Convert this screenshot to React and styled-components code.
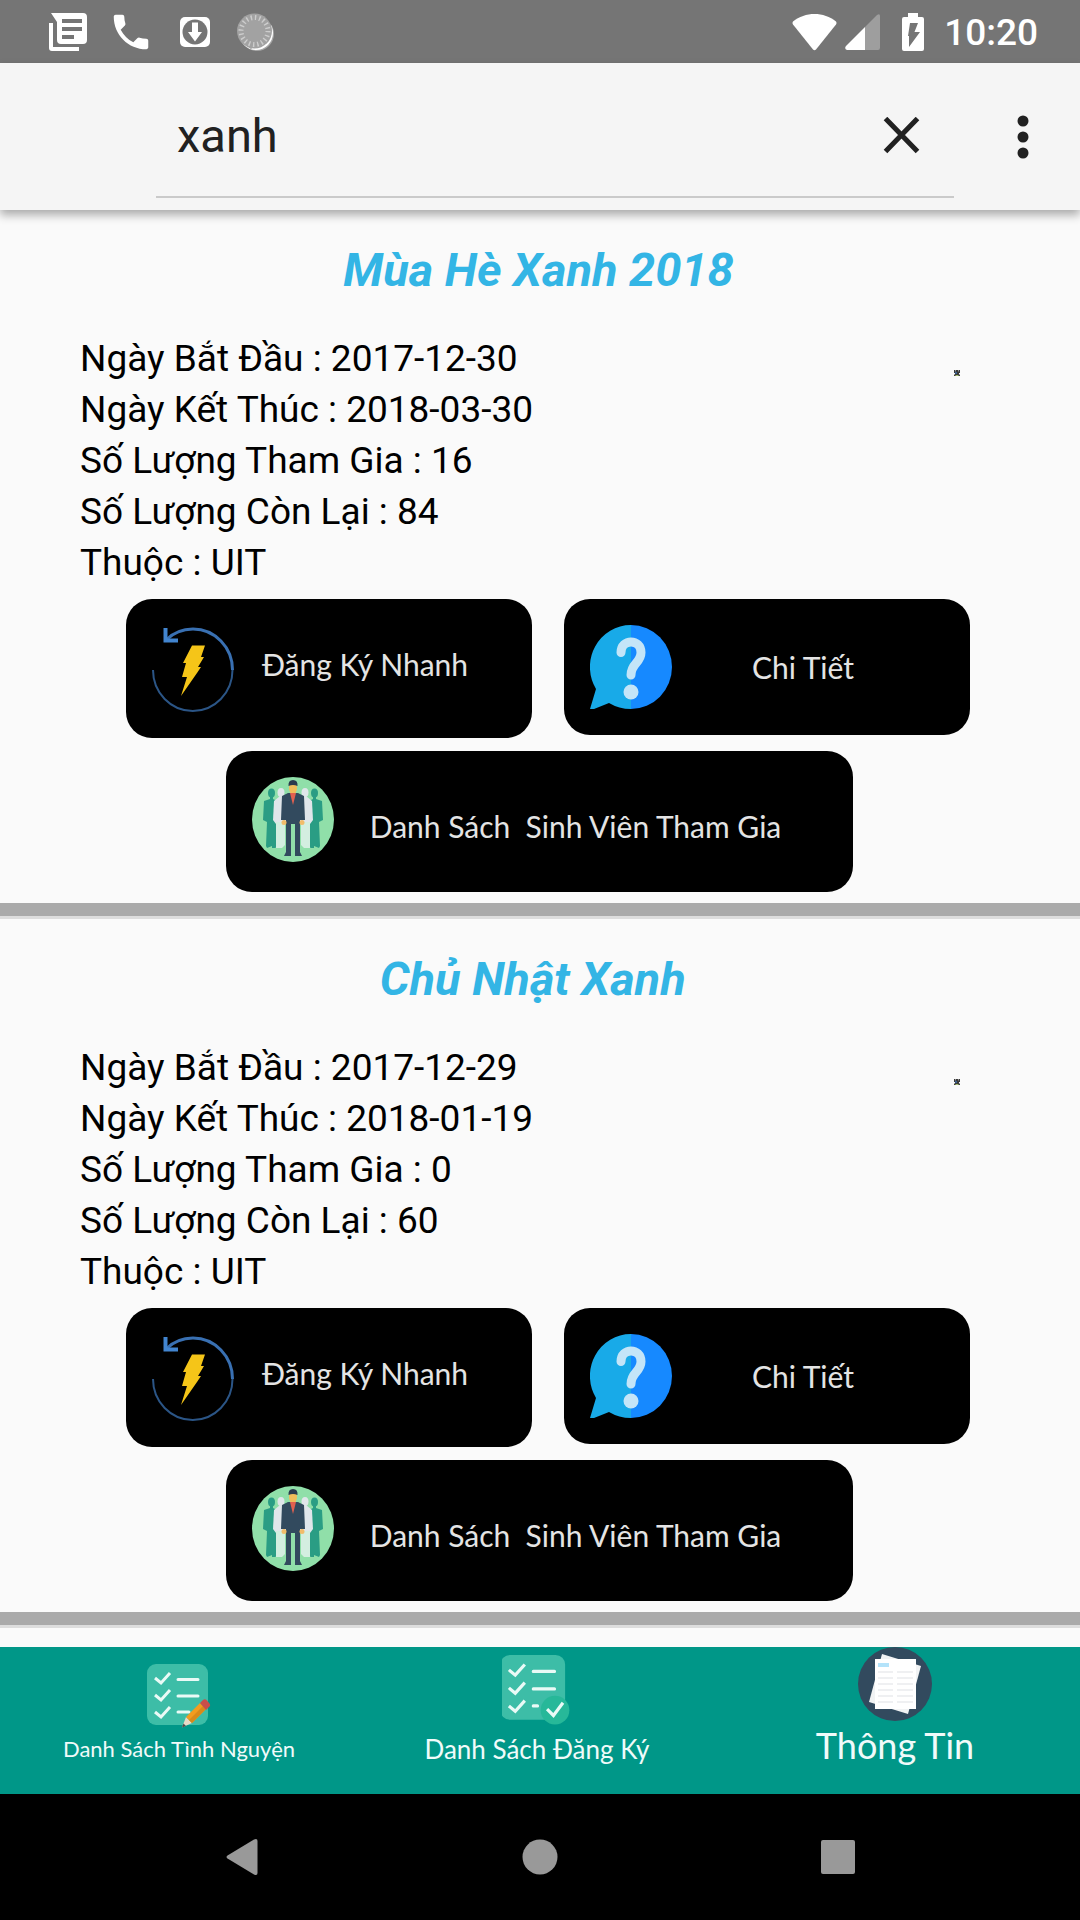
import React, { useState } from "react";
import styled, { createGlobalStyle } from "styled-components";

const GlobalStyle = createGlobalStyle`
  *, *::before, *::after { box-sizing: border-box; }
  body {
    margin: 0;
    background: #fafafa;
    color: #000;
    font-family: Roboto, "Noto Sans", sans-serif;
  }
  button, input { font: inherit; color: inherit; }
  button { margin: 0; padding: 0; border: 0; background: none; cursor: pointer; }
  svg { display: block; flex: none; }
`;

const Screen = styled.div`
  min-height: 100vh;
  display: flex;
  flex-direction: column;
`;

/* ---------- Status bar ---------- */

const StatusBar = styled.header`
  display: flex;
  align-items: center;
  justify-content: space-between;
  height: 63px;
  padding: 0 42px 0 48px;
  background: #757575;
  color: #fff;
`;

const StatusGroup = styled.div`
  display: flex;
  align-items: center;
  gap: ${(p) => p.$gap}px;
`;

const Clock = styled.time`
  margin-left: 12px;
  padding-top: 2px;
  font-size: 37px;
  font-weight: 500;
  line-height: 44px;
`;

/* ---------- Search toolbar ---------- */

const Toolbar = styled.form`
  position: relative;
  z-index: 1;
  display: flex;
  align-items: stretch;
  height: 147px;
  padding: 12px 0 12px 156px;
  background: #f5f5f5;
  color: #212121;
  box-shadow: 0 5px 9px rgba(0, 0, 0, 0.32);
`;

const SearchField = styled.div`
  flex: 1;
  min-width: 0;
  display: flex;
  border-bottom: 2px solid #cacaca;
`;

const SearchInput = styled.input`
  flex: 1;
  min-width: 0;
  padding: 0 0 0 21px;
  border: 0;
  outline: 0;
  background: transparent;
  font-size: 47px;
  line-height: 56px;
`;

const ToolButton = styled.button`
  display: flex;
  align-items: center;
  justify-content: center;
  width: ${(p) => p.$width}px;
`;

const MenuSlot = styled.div`
  display: flex;
  padding-left: 12px;
`;

/* ---------- Campaign list ---------- */

const List = styled.main`
  flex: 1;
`;

const Card = styled.article`
  padding: 32px 0 11px;
  border-bottom: 13px solid #aaa;
`;

const Divider = styled.div`
  height: 3px;
  background: #ddd;
`;

const Title = styled.h2`
  margin: 0 0 36px;
  padding-right: 3px;
  color: #33b5e5;
  font-size: 47px;
  font-style: italic;
  font-weight: 700;
  line-height: 55px;
  text-align: center;
  white-space: pre;
`;

const Info = styled.div`
  display: flex;
  justify-content: space-between;
  align-items: flex-start;
  padding: 0 120px 0 80px;
`;

const Facts = styled.ul`
  margin: 0;
  padding: 0;
  list-style: none;
  font-size: 37px;
  line-height: 51px;
`;

const Thumb = styled.div`
  padding-top: 37px;
`;

const Actions = styled.div`
  display: grid;
  grid-template-columns: 1fr 1fr;
  align-items: start;
  gap: 32px;
  padding: 11px 110px 13px 126px;
`;

const WideAction = styled.div`
  display: grid;
  padding: 0 227px 0 226px;
`;

const ActionButton = styled.button`
  display: flex;
  align-items: flex-start;
  height: ${(p) => p.$height}px;
  padding: 26px;
  border-radius: 26px;
  background: #000;
`;

const ActionLabel = styled.span`
  flex: 1;
  padding: ${(p) => p.$top}px 10px 0 0;
  color: #e4e4e4;
  font-family: Lato, "Open Sans", sans-serif;
  font-size: 30px;
  line-height: 36px;
  text-align: center;
  white-space: pre;
`;

/* ---------- Bottom tabs ---------- */

const Tabs = styled.nav`
  display: grid;
  grid-template-columns: repeat(3, 1fr);
  height: 147px;
  padding-right: 6px;
  background: #009788;
`;

const Tab = styled.button`
  display: flex;
  flex-direction: column;
  align-items: center;
`;

const TabIcon = styled.span`
  height: 82px;
  padding-top: ${(p) => p.$top}px;
`;

const TabLabel = styled.span`
  color: #f0fbfa;
  font-family: Lato, "Open Sans", sans-serif;
  font-size: ${(p) => p.$size}px;
  line-height: ${(p) => p.$line}px;
  white-space: nowrap;
`;

/* ---------- System navigation ---------- */

const SystemNav = styled.footer`
  display: flex;
  height: 126px;
  padding: 0 93px;
  background: #000;
`;

const SystemButton = styled.button`
  flex: 1;
  display: flex;
  align-items: center;
  justify-content: center;
`;

/* ---------- Drawings ---------- */

const NewsIcon = () => (
  <svg width="40" height="40" viewBox="0 0 40 40" fill="#fff" aria-hidden="true">
    <path d="M3 1H35a4 4 0 0 1 4 4V28a4 4 0 0 1-4 4H13a4 4 0 0 1-4-4V10ZM14 7v4H34V7ZM14 15v4H34v-4ZM14 23v4H26v-4Z" fillRule="evenodd" />
    <path d="M1 11H5V35H31v4H4a3 3 0 0 1-3-3Z" />
  </svg>
);

const PhoneIcon = () => (
  <svg width="46" height="46" viewBox="0 0 24 24" fill="#fff" aria-hidden="true">
    <path d="M6.62 10.79c1.44 2.83 3.76 5.14 6.59 6.59l2.2-2.2c.27-.27.67-.36 1.02-.24 1.12.37 2.33.57 3.57.57.55 0 1 .45 1 1V20c0 .55-.45 1-1 1-9.39 0-17-7.61-17-17 0-.55.45-1 1-1h3.5c.55 0 1 .45 1 1 0 1.25.2 2.45.57 3.57.11.35.03.74-.25 1.02z" />
  </svg>
);

const DownloadIcon = () => (
  <svg width="30" height="30" viewBox="0 0 30 30" aria-hidden="true">
    <rect width="30" height="30" rx="5" fill="#fff" />
    <circle cx="15" cy="15" r="12.5" fill="#757575" />
    <path d="M12 5.500h6V15h4L15 24.500 8 15h4Z" fill="#fff" />
  </svg>
);

const SpinnerIcon = () => (
  <svg width="38" height="38" viewBox="0 0 38 38" aria-hidden="true">
    <circle cx="20" cy="21" r="17" fill="#a6a6a6" />
    <circle cx="19" cy="20" r="17" fill="#fff" />
    <path d="M0 22V0H22L36 10 14 36Z" fill="#757575" />
    <circle cx="17.500" cy="18" r="17.500" fill="#a2a2a2" />
    <circle cx="17.500" cy="18" r="13.500" fill="none" stroke="#cdcdcd" strokeWidth="5" strokeDasharray="1.4 2.84" />
  </svg>
);

const WifiIcon = () => (
  <svg width="45" height="38" viewBox="0 0 45 38" fill="#fff" aria-hidden="true">
    <path d="M1 8.500C13-1.500 32-1.500 44 8.500Q45 10 44 11.500L24 36.500Q22.500 38 21 36.500L1 11.500Q0 10 1 8.500Z" />
  </svg>
);

const SignalIcon = () => (
  <svg width="35" height="36" viewBox="0 0 35 36" aria-hidden="true">
    <path d="M20 13L32 1Q35-1 35 2V33.500Q35 36 33 36H20Z" fill="#9e9e9e" />
    <path d="M20 13V36H2Q-1 35 1 32Z" fill="#fff" />
  </svg>
);

const BatteryIcon = () => (
  <svg width="22" height="38" viewBox="0 0 22 38" aria-hidden="true">
    <path d="M6 0H16V4H20a2 2 0 0 1 2 2V36a2 2 0 0 1-2 2H2a2 2 0 0 1-2-2V6A2 2 0 0 1 2 4H6Z" fill="#fff" />
    <path d="M8 10H16L12.500 19H18L7 34V23H6Z" fill="#757575" />
  </svg>
);

const CloseIcon = () => (
  <svg width="38" height="38" viewBox="0 0 38 38" aria-hidden="true">
    <path d="M2.500 1.500L34.500 34.500M34.500 1.500L2.500 34.500" stroke="#212121" strokeWidth="5" />
  </svg>
);

const MoreIcon = () => (
  <svg width="12" height="44" viewBox="0 0 12 44" fill="#212121" aria-hidden="true">
    <circle cx="6" cy="6" r="5.500" />
    <circle cx="6" cy="22" r="5.500" />
    <circle cx="6" cy="38" r="5.500" />
  </svg>
);

const ThumbIcon = () => (
  <svg width="6" height="6" viewBox="0 0 6 6" aria-hidden="true">
    <path d="M0 0H1.500V1.500H2V0H4V1.500H4.500V0H6V3H5V4.500H6V6H0V4.500H1V3H0Z" fill="#3a3a3a" />
    <path d="M1 2H3V4H1Z" fill="#3b5f8c" />
    <path d="M1.500 5H4.500V6H1.500Z" fill="#a8c070" />
  </svg>
);

const FlashIcon = () => (
  <svg width="82" height="87" viewBox="0 0 82 87" aria-hidden="true">
    <path d="M14 15C22 7 31 4 41 4A39.500 41 0 0 1 80.500 45" fill="none" stroke="#3970b2" strokeWidth="3" />
    <path d="M80.500 45A39.750 41 0 0 1 1 45" fill="none" stroke="#2b5586" strokeWidth="2" />
    <path d="M13.500 3V15.500H26" fill="none" stroke="#4285d0" strokeWidth="4" />
    <path d="M40 20.500H53L49 32H52L46 42H49L45 48L29 71L35 52H30L34 38H31Z" fill="#f5c518" />
  </svg>
);

const QuestionIcon = () => (
  <svg width="82" height="84" viewBox="0 0 82 84" aria-hidden="true">
    <path d="M41 0A41 42 0 0 0 6 64L0 84H4L19 78Q29 84 41 84Z" fill="#18aae8" />
    <path d="M41 0A41 42 0 0 1 41 84Z" fill="#1689ff" />
    <path d="M31 27.500C31 13.500 51 13.500 51 27.500C51 38 41 38 41 50" fill="none" stroke="#c4e5f8" strokeWidth="9" strokeLinecap="round" />
    <circle cx="41" cy="67" r="7.500" fill="#c4e5f8" />
  </svg>
);

const PeopleIcon = () => (
  <svg width="82" height="85" viewBox="0 0 82 85" aria-hidden="true">
    <ellipse cx="41" cy="42.500" rx="41" ry="42.500" fill="#90dfa9" />
    <g fill="#2a9d84">
      <ellipse cx="19.500" cy="16" rx="3.500" ry="4.500" />
      <ellipse cx="62.500" cy="16" rx="3.500" ry="4.500" />
      <path d="M18 19H21V22L25 24V70L23 71H20V69L15 71L14 69L15 45L11 43L12 24L18 22Z" />
      <path d="M64 19H61V22L57 24V70L59 71H62V69L67 71L68 69L67 45L71 43L70 24L64 22Z" />
    </g>
    <g fill="#e0e6ea">
      <ellipse cx="29" cy="15.500" rx="3.500" ry="4.500" />
      <ellipse cx="53" cy="15.500" rx="3.500" ry="4.500" />
      <path d="M28 19H34V47H24L21 43L22 24Z" />
      <path d="M54 19H48V47H58L61 43L60 24Z" />
    </g>
    <path d="M24 45H33V68L30 71H24Z" fill="#d3eee0" />
    <path d="M58 45H49V68L52 71H58Z" fill="#d3eee0" />
    <path d="M36 16H46L52 19L53 43H48V75L50 79H43V47H39V79H32L34 75V43H29L30 19Z" fill="#324a5e" />
    <ellipse cx="41" cy="11" rx="4" ry="6" fill="#f1bc5a" />
    <path d="M36.500 9Q36 3 41 3T45.500 9Q41 7 36.500 9Z" fill="#2b3b4e" />
    <path d="M38 16H44L41 28Z" fill="#e2604f" />
    <circle cx="32" cy="45.500" r="2.500" fill="#f1bc6a" />
    <circle cx="50" cy="45.500" r="2.500" fill="#f1bc6a" />
  </svg>
);

const Checklist = ({ lastLine }) => (
  <>
    <rect width="61" height="61" rx="9" fill="#3dbda7" />
    <g fill="none" stroke="#eafaf6" strokeWidth="3">
      <path d="M8 14L14 19 23 9M8 31L14 36 23 26M8 48L14 53 23 43" />
      <path d={`M31 15.500H51M31 32H51M31 48H${lastLine}`} strokeLinecap="round" />
    </g>
  </>
);

const EditListIcon = () => (
  <svg width="64" height="65" viewBox="0 0 64 65" aria-hidden="true">
    <Checklist lastLine={42} />
    <path d="M35 63.500L39 53 45 59Z" fill="#ead9c6" />
    <path d="M35 63.500L36.500 59.500 39 62Z" fill="#4a4a4a" />
    <path d="M39 53L53 39 59 45 45 59Z" fill="#f29c1f" />
    <path d="M42 56L56 42 59 45 45 59Z" fill="#d98a1a" />
    <path d="M53 39L56 36Q58 34.500 60 36.500L62.500 39.500Q64 41.500 62 43L59 46Z" fill="#c94f4a" />
  </svg>
);

const CheckedListIcon = () => (
  <svg width="70" height="70" viewBox="2 0 65 66" aria-hidden="true">
    <Checklist lastLine={35} />
    <circle cx="51.500" cy="52" r="13.500" fill="#27b899" />
    <path d="M44 51L50 57 59 45" fill="none" stroke="#eafaf6" strokeWidth="3" />
  </svg>
);

const PapersIcon = () => (
  <svg width="74" height="74" viewBox="0 0 74 74" aria-hidden="true">
    <circle cx="37" cy="37" r="37" fill="#324a5e" />
    <path d="M24 7L63 19 50 67 11 55Z" fill="#f1f3f4" />
    <path d="M17 12H58V62H17Z" fill="#fff" />
    <path d="M20 16H31V20H20Z" fill="#b4e3fa" />
    <path d="M20 25H35M20 31H35M20 37H35M20 43H35M20 49H35M20 55H35M39 25H55M39 31H55M39 37H55M39 43H55M39 49H55M39 55H55" stroke="#eff0f2" strokeWidth="2" />
  </svg>
);

/* ---------- Data ---------- */

const campaigns = [
  {
    title: "Mùa Hè Xanh 2018",
    start: "2017-12-30",
    end: "2018-03-30",
    joined: 16,
    left: 84,
    owner: "UIT",
  },
  {
    title: "Chủ Nhật Xanh ",
    start: "2017-12-29",
    end: "2018-01-19",
    joined: 0,
    left: 60,
    owner: "UIT",
  },
];

const tabs = [
  { label: "Danh Sách Tình Nguyện", Icon: EditListIcon, top: 17, size: 22, line: 40 },
  { label: "Danh Sách Đăng Ký", Icon: CheckedListIcon, top: 8, size: 26, line: 40 },
  { label: "Thông Tin", Icon: PapersIcon, top: 0, size: 36, line: 32 },
];

const Campaign = ({ item }) => (
  <>
    <Card>
      <Title>{item.title}</Title>
      <Info>
        <Facts>
          <li>Ngày Bắt Đầu : {item.start}</li>
          <li>Ngày Kết Thúc : {item.end}</li>
          <li>Số Lượng Tham Gia : {item.joined}</li>
          <li>Số Lượng Còn Lại : {item.left}</li>
          <li>Thuộc : {item.owner}</li>
        </Facts>
        <Thumb>
          <ThumbIcon />
        </Thumb>
      </Info>
      <Actions>
        <ActionButton type="button" $height={139}>
          <FlashIcon />
          <ActionLabel $top={21}>Đăng Ký Nhanh</ActionLabel>
        </ActionButton>
        <ActionButton type="button" $height={136}>
          <QuestionIcon />
          <ActionLabel $top={24}>Chi Tiết</ActionLabel>
        </ActionButton>
      </Actions>
      <WideAction>
        <ActionButton type="button" $height={141}>
          <PeopleIcon />
          <ActionLabel $top={31}>{"Danh Sách  Sinh Viên Tham Gia"}</ActionLabel>
        </ActionButton>
      </WideAction>
    </Card>
    <Divider />
  </>
);

export default function App() {
  const [query, setQuery] = useState("xanh");

  return (
    <Screen>
      <GlobalStyle />
      <StatusBar>
        <StatusGroup $gap={20}>
          <NewsIcon />
          <StatusGroup $gap={27}>
            <StatusGroup $gap={26}>
              <PhoneIcon />
              <DownloadIcon />
            </StatusGroup>
            <SpinnerIcon />
          </StatusGroup>
        </StatusGroup>
        <StatusGroup $gap={8}>
          <WifiIcon />
          <StatusGroup $gap={22}>
            <SignalIcon />
            <StatusGroup $gap={8}>
              <BatteryIcon />
              <Clock>10:20</Clock>
            </StatusGroup>
          </StatusGroup>
        </StatusGroup>
      </StatusBar>

      <Toolbar role="search" onSubmit={(e) => e.preventDefault()}>
        <SearchField>
          <SearchInput
            type="text"
            aria-label="Tìm kiếm"
            value={query}
            onChange={(e) => setQuery(e.target.value)}
          />
          <ToolButton type="button" $width={104} aria-label="Xóa" onClick={() => setQuery("")}>
            <CloseIcon />
          </ToolButton>
        </SearchField>
        <MenuSlot>
          <ToolButton type="button" $width={114} aria-label="Tùy chọn khác">
            <MoreIcon />
          </ToolButton>
        </MenuSlot>
      </Toolbar>

      <List>
        {campaigns.map((item) => (
          <Campaign key={item.title} item={item} />
        ))}
      </List>

      <Tabs>
        {tabs.map(({ label, Icon, top, size, line }) => (
          <Tab key={label} type="button">
            <TabIcon $top={top}>
              <Icon />
            </TabIcon>
            <TabLabel $size={size} $line={line}>
              {label}
            </TabLabel>
          </Tab>
        ))}
      </Tabs>

      <SystemNav>
        <SystemButton type="button" aria-label="Quay lại">
          <svg width="32" height="38" viewBox="0 0 32 38" fill="#999" aria-hidden="true">
            <path d="M1.500 17.500L28 1.500Q31.500 0 31.500 3V35Q31.500 38 28 36.500L1.500 20.500Q-.5 19 1.500 17.500Z" />
          </svg>
        </SystemButton>
        <SystemButton type="button" aria-label="Trang chủ">
          <svg width="36" height="36" viewBox="0 0 36 36" fill="#999" aria-hidden="true">
            <circle cx="18" cy="18" r="17.500" />
          </svg>
        </SystemButton>
        <SystemButton type="button" aria-label="Gần đây">
          <svg width="34" height="34" viewBox="0 0 34 34" fill="#999" aria-hidden="true">
            <rect width="34" height="34" rx="2" />
          </svg>
        </SystemButton>
      </SystemNav>
    </Screen>
  );
}
